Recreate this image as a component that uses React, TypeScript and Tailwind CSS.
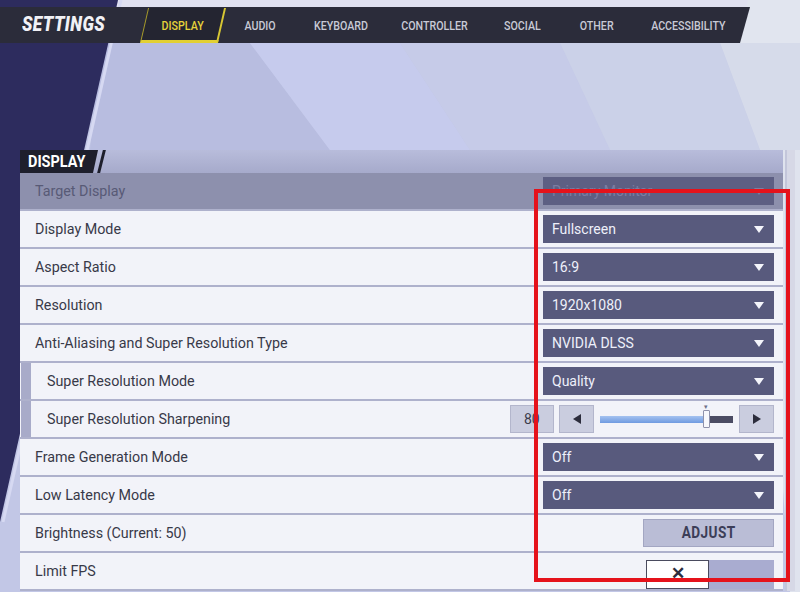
import React from 'react';

type Row = {
  label: string;
  kind: 'select' | 'slider' | 'button' | 'check';
  value?: string;
  sub?: boolean;
  disabled?: boolean;
};

const rows: Row[] = [
  { label: 'Target Display', kind: 'select', value: 'Primary Monitor', disabled: true },
  { label: 'Display Mode', kind: 'select', value: 'Fullscreen' },
  { label: 'Aspect Ratio', kind: 'select', value: '16:9' },
  { label: 'Resolution', kind: 'select', value: '1920x1080' },
  { label: 'Anti-Aliasing and Super Resolution Type', kind: 'select', value: 'NVIDIA DLSS' },
  { label: 'Super Resolution Mode', kind: 'select', value: 'Quality', sub: true },
  { label: 'Super Resolution Sharpening', kind: 'slider', value: '80', sub: true },
  { label: 'Frame Generation Mode', kind: 'select', value: 'Off' },
  { label: 'Low Latency Mode', kind: 'select', value: 'Off' },
  { label: 'Brightness (Current: 50)', kind: 'button', value: 'ADJUST' },
  { label: 'Limit FPS', kind: 'check' },
];

const tabs = [
  { name: 'DISPLAY', w: 'w-[86px]' },
  { name: 'AUDIO', w: 'w-[68px]' },
  { name: 'KEYBOARD', w: 'w-[94px]' },
  { name: 'CONTROLLER', w: 'w-[94px]' },
  { name: 'SOCIAL', w: 'w-[80px]' },
  { name: 'OTHER', w: 'w-[70px]' },
  { name: 'ACCESSIBILITY', w: 'w-[112px]' },
];

const Caret = ({ faded }: { faded?: boolean }) => (
  <svg width="10" height="7" viewBox="0 0 10 7">
    <polygon points="0,0 10,0 5,7" fill={faded ? '#7c7ea2' : '#f4f5fb'} />
  </svg>
);

const Backdrop = () => (
  <svg className="absolute inset-0" width="800" height="592" viewBox="0 0 800 592">
    <rect width="800" height="592" fill="#c2c7e6" />
    <polygon points="118,0 800,0 800,8 116,8" fill="#e0e1f0" />
    <polygon points="100,43 250,43 330,150 90,150" fill="#b8bde0" />
    <polygon points="250,43 400,43 470,150 330,150" fill="#c6cbed" />
    <polygon points="400,43 560,43 610,150 470,150" fill="#c6cbe8" />
    <polygon points="560,43 720,43 760,150 610,150" fill="#cbd1e8" />
    <polygon points="720,43 800,43 800,150 760,150" fill="#d6dbea" />
    <polygon points="748,0 800,0 800,43 738,43" fill="#e1e5ef" />
    <polygon points="760,150 800,150 800,592 790,592" fill="#dfe3ee" />
    <polygon points="0,0 118,0 0,522" fill="#2d2c5e" />
    <line x1="121" y1="0" x2="3" y2="522" stroke="#d6d9f2" strokeWidth="3" />
  </svg>
);

const Control = ({ row }: { row: Row }) => {
  if (row.kind === 'select') {
    return (
      <div
        className={`w-[231px] h-[28px] flex items-center justify-between pl-[9px] pr-[10px] ${
          row.disabled ? 'bg-[#5d5f83]' : 'bg-[#585a7d]'
        }`}
      >
        <span className={`text-[14px] ${row.disabled ? 'text-[#7b7da2]' : 'text-[#eef0fa]'}`}>{row.value}</span>
        <Caret faded={row.disabled} />
      </div>
    );
  }
  if (row.kind === 'slider') {
    return (
      <div className="flex items-center h-[28px]">
        <div className="w-[44px] h-[28px] mr-[5px] bg-[#cacddf] border border-[#b3b6cc] flex items-center pl-[13px] text-[14px] text-[#3b3c4c]">
          {row.value}
        </div>
        <button className="w-[35px] h-[28px] bg-[#cacddf] border border-[#b3b6cc] flex items-center justify-center">
          <svg width="8" height="10" viewBox="0 0 8 10">
            <polygon points="8,0 8,10 0,5" fill="#2c2d3c" />
          </svg>
        </button>
        <div className="relative w-[133px] h-[7px] ml-[6px] mr-[6px] bg-[#4b4c63]">
          <div className="h-full w-[104px] bg-gradient-to-b from-[#a4c2f0] to-[#6f9ae0]" />
          <div className="absolute left-[103px] top-[-6px] w-[7px] h-[18px] bg-[#f7f8fc] border border-[#8f92ab] rounded-[1px]" />
          <div className="absolute left-[104px] top-[-12px] text-[7px] leading-none text-[#6d6f88]">▾</div>
        </div>
        <button className="w-[35px] h-[28px] bg-[#cacddf] border border-[#b3b6cc] flex items-center justify-center">
          <svg width="8" height="10" viewBox="0 0 8 10">
            <polygon points="0,0 0,10 8,5" fill="#2c2d3c" />
          </svg>
        </button>
      </div>
    );
  }
  if (row.kind === 'button') {
    return (
      <button className="w-[131px] h-[28px] bg-[#babdd6] border border-[#a3a6c2] flex items-center justify-center">
        <span className="inline-block scale-x-[0.85] text-[16px] font-bold text-[#3c3e58] tracking-[0.5px]">{row.value}</span>
      </button>
    );
  }
  return (
    <div className="flex h-[29px] w-[128px] self-start mt-[7px]">
      <div className="w-[63px] h-full bg-white border border-[#4a4b5e] flex items-start justify-center pt-[4px]">
        <span className="text-[17px] font-bold leading-none text-[#2d2e3d]">✕</span>
      </div>
      <div className="flex-1 h-full bg-[#a9acd0]" />
    </div>
  );
};

export default function App() {
  return (
    <div className="relative w-[800px] h-[592px] overflow-hidden font-['Roboto',sans-serif]">
      <Backdrop />

      <div className="relative flex flex-col">
        {/* top tab bar */}
        <div className="mt-[7px] h-[36px] w-[750px] bg-[#2b2c3a] flex items-center [clip-path:polygon(0_0,100%_0,calc(100%-10px)_100%,0_100%)]">
          <div className="w-[140px] pl-[22px]">
            <span className="inline-block origin-left scale-x-[0.82] text-[21px] font-black italic text-[#f1f1f6] tracking-[0.5px]">
              SETTINGS
            </span>
          </div>
          {tabs.map((t, i) => (
            <div key={t.name} className={`relative h-full flex items-center justify-center ${t.w}`}>
              {i === 0 && (
                <div className="absolute left-[4px] right-[4px] top-[1px] bottom-0 skew-x-[-13deg] bg-[#242531] border-l border-r-2 border-b-[3px] border-l-[#a79b2c] border-r-[#d7c734] border-b-[#e2d033]" />
              )}
              <span
                className={`relative inline-block scale-x-[0.82] text-[13px] font-medium pt-[1px] ${
                  i === 0 ? 'text-[#e6d33a]' : 'text-[#c8cad6]'
                }`}
              >
                {t.name}
              </span>
            </div>
          ))}
        </div>

        <div className="h-[107px]" />

        <div className="flex ml-[20px]">
          {/* settings panel */}
          <div className="w-[763px] flex flex-col">
            <div className="h-[23px] flex bg-gradient-to-b from-[#b8bcdb] to-[#a6aacb]">
              <div className="w-[78px] h-full bg-[#1e1f2c] flex items-center pl-[8px] [clip-path:polygon(0_0,100%_0,calc(100%-5px)_100%,0_100%)]">
                <span className="inline-block origin-left scale-x-[0.85] text-[17px] font-bold text-white">DISPLAY</span>
              </div>
              <div className="w-[3px] h-full ml-[2px] bg-[#1e1f2c] skew-x-[-14deg]" />
            </div>

            {rows.map((r) => (
              <div
                key={r.label}
                className={`h-[38px] flex border-b-2 border-[#aeb1cc] ${
                  r.disabled ? 'bg-[#8d90ad]' : 'bg-[#f2f3f9]'
                }`}
              >
                {r.sub && <div className="w-[10px] ml-[1px] bg-[#a8abc9]" />}
                <div className={`flex-1 flex items-center pt-[2px] ${r.sub ? 'pl-[16px]' : 'pl-[15px]'}`}>
                  <span
                    className={`text-[14.3px] ${
                      r.disabled ? 'text-[#585a76]' : 'text-[#383948]'
                    }`}
                  >
                    {r.label}
                  </span>
                </div>
                <div className="flex items-center pr-[9px]">
                  <Control row={r} />
                </div>
              </div>
            ))}
          </div>

          {/* scrollbar track */}
          <div className="ml-[2px] w-[10px] bg-[#d6d8e6] border-l-2 border-[#c3c6da]" />
        </div>
      </div>

      {/* red highlight box */}
      <div className="absolute left-[534px] top-[189px] w-[256px] h-[393px] border-4 border-[#e5121b]" />
    </div>
  );
}
